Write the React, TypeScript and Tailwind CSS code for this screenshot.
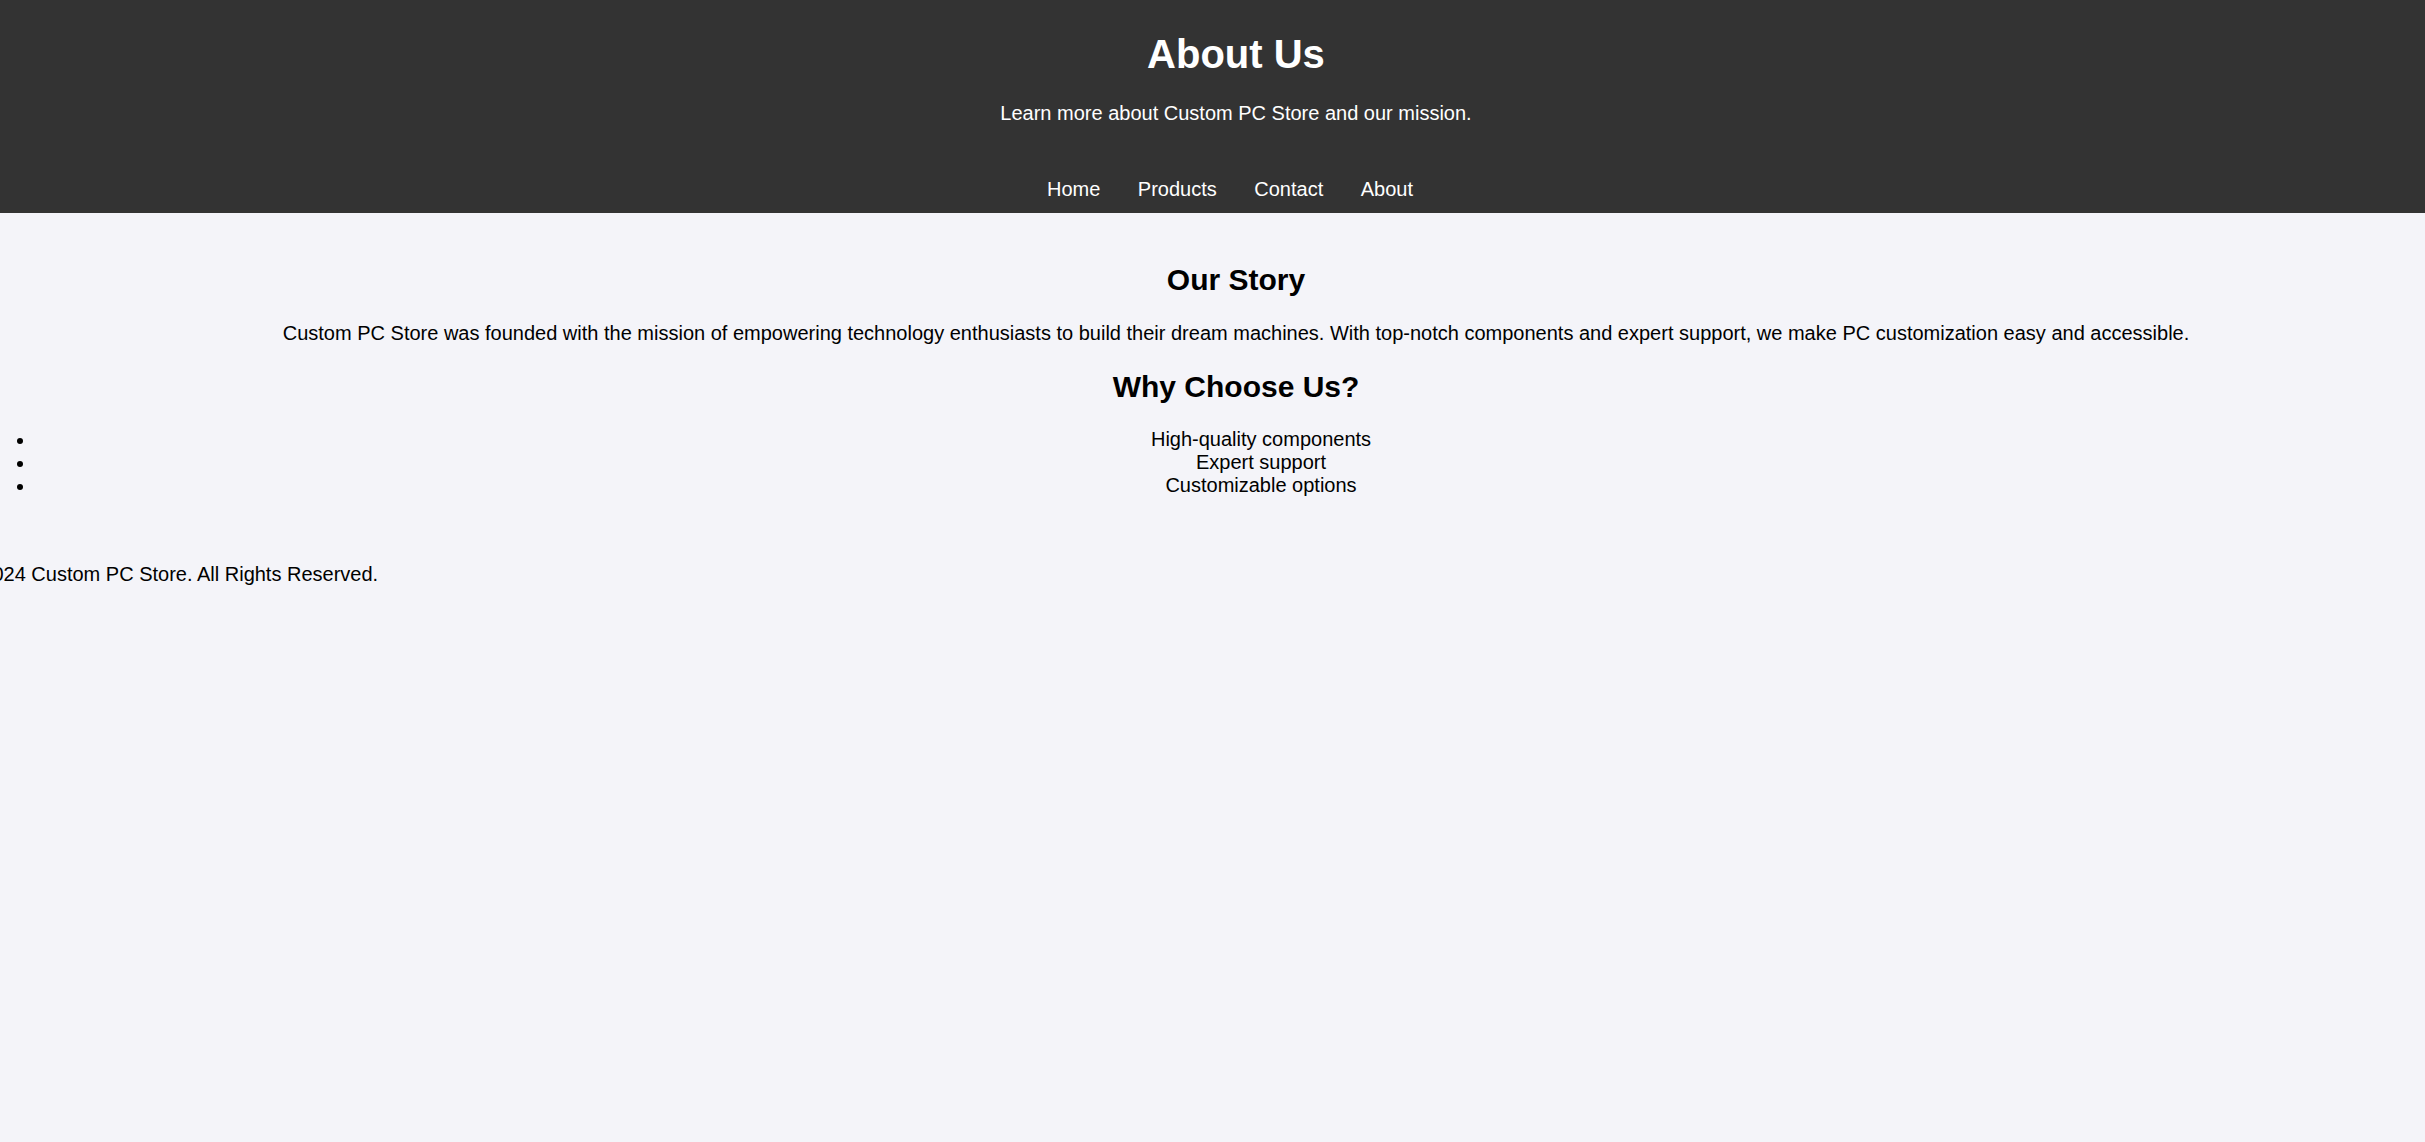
import React from "react";

export default function App() {
  return (
    <div
      className="w-full min-h-screen overflow-hidden bg-[#f4f4f9] text-black"
      style={{ fontFamily: '"Liberation Sans", Arial, sans-serif' }}
    >
      <div className="w-[2472px]">
        <header className="h-[213px] bg-[#333333] text-white text-center pt-[30.8px]">
          <h1 className="text-[40px] font-bold leading-[46px]">About Us</h1>
          <p className="mt-[25.35px] text-[20px] leading-[23px]">
            Learn more about Custom PC Store and our mission.
          </p>
          <nav className="mt-[52.5px] flex justify-center gap-[37.5px] pr-[12px] text-[20px] leading-[23px]">
            <a className="text-white">Home</a>
            <a className="text-white">Products</a>
            <a className="text-white">Contact</a>
            <a className="text-white">About</a>
          </nav>
        </header>
        <main className="pt-[49.75px] text-center">
          <h2 className="text-[30px] font-bold leading-[34.5px]">Our Story</h2>
          <p className="mt-[24.45px] text-[20px] leading-[23px]">
            Custom PC Store was founded with the mission of empowering technology enthusiasts to build their dream machines. With top-notch components and expert support, we make PC customization easy and accessible.
          </p>
          <h2 className="mt-[25.55px] text-[30px] font-bold leading-[34.5px]">Why Choose Us?</h2>
          <ul className="mt-[23.3px] text-[20px] leading-[23px]">
            {["High-quality components", "Expert support", "Customizable options"].map((t) => (
              <li key={t} className="flex">
                <span className="w-[50px] shrink-0 flex">
                  <span className="ml-[17px] mt-[10px] h-[6px] w-[6px] rounded-full bg-black" />
                </span>
                <span className="flex-1 text-center">{t}</span>
              </li>
            ))}
          </ul>
        </main>
        <footer className="mt-[65.5px] text-[20px] leading-[23px] text-left ml-[-39px]">
          © 2024 Custom PC Store. All Rights Reserved.
        </footer>
      </div>
    </div>
  );
}
